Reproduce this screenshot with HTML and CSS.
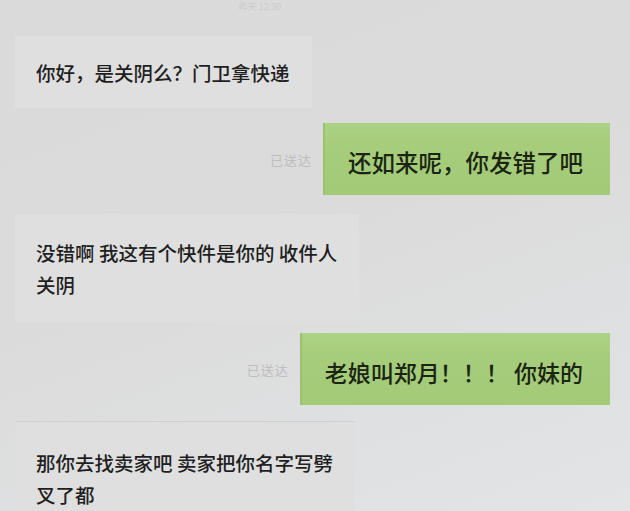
FILE: index.html
```html
<!DOCTYPE html>
<html lang="zh">
<head>
<meta charset="utf-8">
<link rel="stylesheet" href="styles.css">
</head>
<body>
<div class="chat">
  <div class="time"><span>昨天 12:30</span></div>

  <div class="row row-in r1">
    <div class="bubble in single">你好，是关阴么？门卫拿快递</div>
  </div>

  <div class="row row-out s1">
    <span class="status">已送达</span>
    <div class="bubble out">还如来呢，你发错了吧</div>
  </div>

  <div class="row row-in r2">
    <div class="bubble in multi">没错啊 我这有个快件是你的 收件人<br>关阴</div>
  </div>

  <div class="row row-out s2">
    <span class="status">已送达</span>
    <div class="bubble out">老娘叫郑月！！！ 你妹的</div>
  </div>

  <div class="row row-in r3">
    <div class="bubble in multi">那你去找卖家吧 卖家把你名字写劈<br>叉了都</div>
  </div>
</div>
</body>
</html>
```

FILE: styles.css
```css
html, body {
  margin: 0;
  padding: 0;
  width: 630px;
  height: 511px;
  overflow: hidden;
}

body {
  background: linear-gradient(160deg, #dadada 0%, #dbdbdb 45%, #e2e4e6 100%);
  font-family: "Noto Sans CJK SC", "Noto Sans", sans-serif;
  color: #222;
}

.chat {
  display: flex;
  flex-direction: column;
}

.time {
  height: 13px;
  padding-top: 1px;
  display: flex;
  justify-content: center;
  padding-right: 110px;
  box-sizing: border-box;
}

.time span {
  font-size: 9px;
  line-height: 12px;
  color: #cbcbcb;
  padding: 0 6px;
}

.row {
  display: flex;
  align-items: center;
}

.row-in {
  padding-left: 15px;
}

.row-out {
  justify-content: flex-end;
  padding-right: 20px;
  gap: 11px;
}

.r1 { margin-top: 23px; }
.s1 { margin-top: 15px; }
.r2 { margin-top: 18px; }
.s2 { margin-top: 10px; }
.r3 { margin-top: 17px; }

.bubble {
  box-sizing: border-box;
  white-space: nowrap;
}

.bubble.in {
  background: #dfdfdf;
  font-size: 19.5px;
  font-weight: 500;
  color: #1f1f1f;
  padding: 0 22px 0 21px;
}

.bubble.in.single {
  height: 72px;
  display: flex;
  align-items: center;
}

.bubble.in.multi {
  line-height: 32px;
  padding-top: 24px;
  padding-bottom: 22px;
}

.r3 .bubble.in.multi {
  padding-top: 25px;
  box-shadow: 0 -1px 0 #d0d0d0;
}

.bubble.out {
  height: 72px;
  padding: 5px 27px 0 25px;
  display: flex;
  align-items: center;
  font-size: 23px;
  font-weight: 500;
  color: #1b2512;
  background: linear-gradient(180deg, #acd285 0%, #a6cd7c 30%, #a2ca77 100%);
  box-shadow: inset 2px 0 0 #9bc26f;
}

.s1 .bubble.out {
  font-size: 23.5px;
}

.status {
  font-size: 13px;
  color: #bdbdbd;
  letter-spacing: 1px;
}
```
